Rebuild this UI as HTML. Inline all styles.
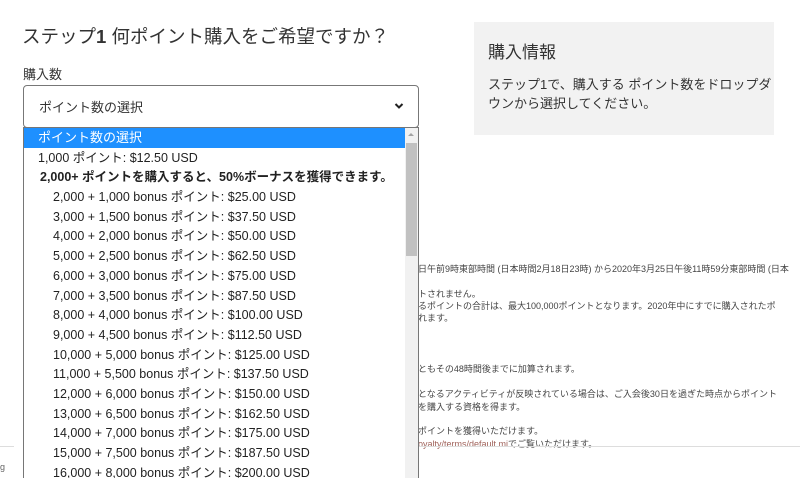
<!DOCTYPE html>
<html><head><meta charset="utf-8"><style>
*{margin:0;padding:0;box-sizing:border-box}
html,body{width:800px;height:478px;overflow:hidden}
body{background:#fff;position:relative;font-family:"Liberation Sans","Noto Sans CJK JP",sans-serif;color:#333}
.a{position:absolute;white-space:nowrap}
.fine{font-size:9px;color:#444;left:418px}
.row{position:absolute;left:24px;width:381px;height:20px;font-size:12.5px;line-height:20px;padding-left:14px;color:#222}
</style></head><body>
<div class="a" style="left:22px;top:23px;font-size:18.5px;color:#333">ステップ<b>1</b> 何ポイント購入をご希望ですか？</div>
<div class="a" style="left:23px;top:64px;font-size:13px;color:#333">購入数</div>
<div class="a" style="left:23px;top:85px;width:396px;height:43px;border:1px solid #777;border-radius:4px"></div>
<div class="a" style="left:39px;top:97px;font-size:13px;color:#333">ポイント数の選択</div>
<svg class="a" style="left:394px;top:102px" width="10" height="8"><path d="M1.5 2 L5 5.5 L8.5 2" stroke="#222" stroke-width="2" fill="none"/></svg>

<div class="a" style="left:474px;top:22px;width:300px;height:113px;background:#f2f2f2"></div>
<div class="a" style="left:488px;top:38px;font-size:17px;color:#333">購入情報</div>
<div class="a" style="left:488px;top:75px;font-size:13px;line-height:19px;color:#333;white-space:normal;width:285px;word-break:break-all">ステップ1で、購入する ポイント数をドロップダウンから選択してください。</div>

<div class="a fine" style="top:262px">日午前9時東部時間 (日本時間2月18日23時) から2020年3月25日午後11時59分東部時間 (日本</div>
<div class="a fine" style="top:287px">トされません。</div>
<div class="a fine" style="top:299px">るポイントの合計は、最大100,000ポイントとなります。2020年中にすでに購入されたポ</div>
<div class="a fine" style="top:311px">れます。</div>
<div class="a fine" style="top:362px">ともその48時間後までに加算されます。</div>
<div class="a fine" style="top:387px">となるアクティビティが反映されている場合は、ご入会後30日を過ぎた時点からポイント</div>
<div class="a fine" style="top:400px">を購入する資格を得ます。</div>
<div class="a fine" style="top:424px">ポイントを獲得いただけます。</div>
<div class="a fine" style="top:437px"><span style="color:#a0625a">oyalty/terms/default.mi</span>でご覧いただけます。</div>
<div class="a" style="left:418px;top:446px;width:382px;height:1px;background:#ddd"></div>
<div class="a" style="left:0;top:446px;width:14px;height:1px;background:#ddd"></div>
<div class="a" style="left:0;top:462px;font-size:9px;color:#666">g</div>

<div class="a" style="left:23px;top:127px;width:396px;height:360px;border:1px solid #767676;background:#fff"></div>
<div class="row" style="top:128px;background:#1e90ff;color:#fff;font-size:13px">ポイント数の選択</div>
<div class="row" style="top:148px">1,000 ポイント: $12.50 USD</div>
<div class="row" style="top:167px;font-weight:bold;padding-left:16px">2,000+ ポイントを購入すると、50%ボーナスを獲得できます。</div>
<div class="row" style="top:187px;padding-left:29px">2,000 + 1,000 bonus ポイント: $25.00 USD</div>
<div class="row" style="top:207px;padding-left:29px">3,000 + 1,500 bonus ポイント: $37.50 USD</div>
<div class="row" style="top:226px;padding-left:29px">4,000 + 2,000 bonus ポイント: $50.00 USD</div>
<div class="row" style="top:246px;padding-left:29px">5,000 + 2,500 bonus ポイント: $62.50 USD</div>
<div class="row" style="top:266px;padding-left:29px">6,000 + 3,000 bonus ポイント: $75.00 USD</div>
<div class="row" style="top:286px;padding-left:29px">7,000 + 3,500 bonus ポイント: $87.50 USD</div>
<div class="row" style="top:305px;padding-left:29px">8,000 + 4,000 bonus ポイント: $100.00 USD</div>
<div class="row" style="top:325px;padding-left:29px">9,000 + 4,500 bonus ポイント: $112.50 USD</div>
<div class="row" style="top:345px;padding-left:29px">10,000 + 5,000 bonus ポイント: $125.00 USD</div>
<div class="row" style="top:364px;padding-left:29px">11,000 + 5,500 bonus ポイント: $137.50 USD</div>
<div class="row" style="top:384px;padding-left:29px">12,000 + 6,000 bonus ポイント: $150.00 USD</div>
<div class="row" style="top:404px;padding-left:29px">13,000 + 6,500 bonus ポイント: $162.50 USD</div>
<div class="row" style="top:423px;padding-left:29px">14,000 + 7,000 bonus ポイント: $175.00 USD</div>
<div class="row" style="top:443px;padding-left:29px">15,000 + 7,500 bonus ポイント: $187.50 USD</div>
<div class="row" style="top:463px;padding-left:29px">16,000 + 8,000 bonus ポイント: $200.00 USD</div>
<div class="a" style="left:405px;top:128px;width:13px;height:350px;background:#f1f1f1"></div>
<div class="a" style="left:406px;top:143px;width:11px;height:113px;background:#c1c1c1"></div>
<svg class="a" style="left:407px;top:131px" width="8" height="6"><path d="M1 5 L4 2 L7 5Z" fill="#a3a3a3"/></svg>
</body></html>
